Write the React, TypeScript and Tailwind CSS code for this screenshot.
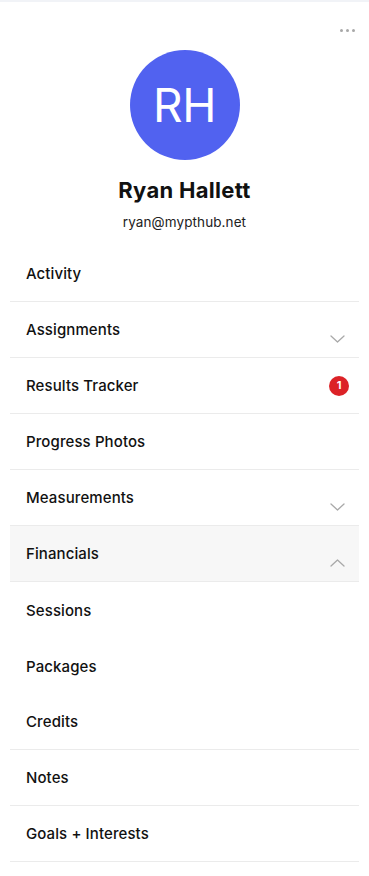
import React from 'react'

type Item = {
  label: string
  chevron?: 'down' | 'up'
  badge?: number
  active?: boolean
  border?: boolean
}

const items: Item[] = [
  { label: 'Activity', border: true },
  { label: 'Assignments', chevron: 'down', border: true },
  { label: 'Results Tracker', badge: 1, border: true },
  { label: 'Progress Photos', border: true },
  { label: 'Measurements', chevron: 'down', border: true },
  { label: 'Financials', chevron: 'up', active: true, border: true },
  { label: 'Sessions' },
  { label: 'Packages' },
  { label: 'Credits', border: true },
  { label: 'Notes', border: true },
  { label: 'Goals + Interests', border: true },
]

const Chevron = ({ dir }: { dir: 'down' | 'up' }) => (
  <svg width="15" height="8" viewBox="0 0 15 8" fill="none" className="mr-[-1px] mt-[18px]">
    <path
      d={dir === 'down' ? 'M1 1l6.5 6 6.5-6' : 'M1 7l6.5-6 6.5 6'}
      stroke="#a9a9a9"
      strokeWidth="1.3"
      strokeLinecap="round"
      strokeLinejoin="round"
    />
  </svg>
)

export default function App() {
  return (
    <div className="min-h-[876px] w-full bg-white font-['Inter',sans-serif] text-[#111]">
      <div className="h-[2px] bg-[#f1f3f7]" />

      <div className="relative flex flex-col items-center pt-[48px]">
        <div className="absolute right-[14px] top-[27px] flex gap-[3px]">
          <span className="h-[3px] w-[3px] rounded-full bg-[#a8a8a8]" />
          <span className="h-[3px] w-[3px] rounded-full bg-[#a8a8a8]" />
          <span className="h-[3px] w-[3px] rounded-full bg-[#a8a8a8]" />
        </div>

        <div className="flex h-[110px] w-[110px] items-center justify-center rounded-full bg-[#5162f0]">
          <span className="text-[46px] font-normal leading-none tracking-[-0.5px] text-white">RH</span>
        </div>

        <div className="mt-[16px] text-[22px] font-bold leading-[28px] tracking-[0.3px]">Ryan Hallett</div>
        <div className="mt-[8px] text-[13.5px] leading-[20px] tracking-[0.1px] text-[#222]">ryan@mypthub.net</div>
      </div>

      <div className="mx-[10px] mt-[14px]">
        {items.map((item) => (
          <div
            key={item.label}
            className={`flex h-[56px] items-center justify-between pl-4 pr-[15px] ${item.border ? 'border-b border-[#ebebeb]' : ''} ${item.active ? 'bg-[#f7f7f7]' : ''}`}
          >
            <span className="pt-[2px] text-[15px] font-medium tracking-[0.1px]">{item.label}</span>
            {item.chevron && <Chevron dir={item.chevron} />}
            {item.badge !== undefined && (
              <span className="mr-[-5px] flex h-[20px] w-[20px] items-center justify-center rounded-full bg-[#dc2227] text-[11px] font-bold text-white">
                {item.badge}
              </span>
            )}
          </div>
        ))}
      </div>
    </div>
  )
}
